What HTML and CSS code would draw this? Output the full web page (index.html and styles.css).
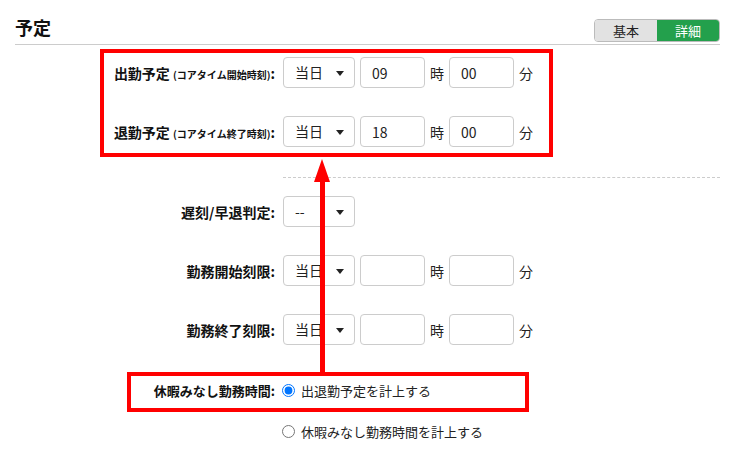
FILE: index.html
```html
<!DOCTYPE html>
<html lang="ja">
<head>
    <meta charset="UTF-8">
    <meta name="viewport" content="width=device-width, initial-scale=1.0">
    <title>予定</title>
    <link rel="stylesheet" href="styles.css">
</head>
<body>
    <div class="panel">
        <div class="panel-head">
            <h2>予定</h2>
            <div class="toggle">
                <span class="toggle-item">基本</span>
                <span class="toggle-item active">詳細</span>
            </div>
        </div>

        <div class="form">
            <div class="row">
                <label class="label">出勤予定 <small>(コアタイム開始時刻)</small>:</label>
                <div class="controls">
                    <span class="select">当日</span>
                    <input class="num" type="text" value="09">
                    <span class="unit">時</span>
                    <input class="num" type="text" value="00">
                    <span class="unit">分</span>
                </div>
            </div>
            <div class="row">
                <label class="label">退勤予定 <small>(コアタイム終了時刻)</small>:</label>
                <div class="controls">
                    <span class="select">当日</span>
                    <input class="num" type="text" value="18">
                    <span class="unit">時</span>
                    <input class="num" type="text" value="00">
                    <span class="unit">分</span>
                </div>
            </div>

            <div class="sep"></div>

            <div class="row">
                <label class="label">遅刻/早退判定:</label>
                <div class="controls">
                    <span class="select">--</span>
                </div>
            </div>
            <div class="row">
                <label class="label">勤務開始刻限:</label>
                <div class="controls">
                    <span class="select">当日</span>
                    <input class="num" type="text">
                    <span class="unit">時</span>
                    <input class="num" type="text">
                    <span class="unit">分</span>
                </div>
            </div>
            <div class="row">
                <label class="label">勤務終了刻限:</label>
                <div class="controls">
                    <span class="select">当日</span>
                    <input class="num" type="text">
                    <span class="unit">時</span>
                    <input class="num" type="text">
                    <span class="unit">分</span>
                </div>
            </div>

            <div class="row radio-row first">
                <label class="label">休暇みなし勤務時間:</label>
                <label class="radio"><input type="radio" name="mode" checked>出退勤予定を計上する</label>
            </div>
            <div class="row radio-row">
                <span class="label"></span>
                <label class="radio"><input type="radio" name="mode">休暇みなし勤務時間を計上する</label>
            </div>
        </div>

        <!-- 注記: 赤枠と矢印 -->
        <div class="mark mark-plan"></div>
        <div class="mark mark-leave"></div>
        <div class="arrow"></div>
    </div>
</body>
</html>
```

FILE: styles.css
```css
body {
    margin: 0;
    font-family: "Noto Sans CJK JP", "Noto Sans", sans-serif;
    color: #222;
    background: #fff;
}

.panel {
    position: relative;
    width: 732px;
    height: 468px;
}

.panel-head {
    display: flex;
    justify-content: space-between;
    align-items: flex-end;
    margin: 0 12px 0 15px;
    height: 44px;
    border-bottom: 1px solid #ccc;
}

.panel-head h2 {
    margin: 0 0 5px;
    font-size: 18px;
    line-height: 24px;
    color: #111;
}

.toggle {
    display: flex;
    margin-bottom: 2px;
    border: 1px solid #bbb;
    border-radius: 4px;
    overflow: hidden;
}

.toggle-item {
    width: 62px;
    height: 21px;
    line-height: 21px;
    text-align: center;
    font-size: 13px;
    background: #e2e2e2;
    color: #222;
}

.toggle-item.active {
    background: #23a04c;
    color: #fff;
}

.form {
    padding-top: 12px;
}

.row {
    display: flex;
    align-items: center;
    height: 31px;
    margin-bottom: 28px;
}

.label {
    width: 275px;
    text-align: right;
    font-size: 14px;
    font-weight: bold;
    color: #111;
    flex-shrink: 0;
}

.label small {
    font-size: 10px;
}

.controls {
    display: flex;
    align-items: center;
    gap: 5px;
    margin-left: 8px;
}

.select {
    position: relative;
    box-sizing: border-box;
    width: 72px;
    height: 31px;
    padding-left: 11px;
    border: 1px solid #ccc;
    border-radius: 4px;
    font-size: 14px;
    line-height: 29px;
}

.select::after {
    content: "";
    position: absolute;
    right: 10px;
    top: 13px;
    border-left: 4px solid transparent;
    border-right: 4px solid transparent;
    border-top: 5px solid #222;
}

.num {
    box-sizing: border-box;
    width: 65px;
    height: 31px;
    padding: 0 11px;
    border: 1px solid #ccc;
    border-radius: 4px;
    font-family: inherit;
    font-size: 14px;
    color: #222;
}

.unit {
    font-size: 14px;
    width: 14px;
}

.sep {
    margin: 2px 12px 18px 283px;
    border-top: 1px dashed #ccc;
}

.row:nth-of-type(2) {
    margin-bottom: 30px;
}

.radio-row {
    height: 20px;
    margin-bottom: 21px;
}

/* 前の行の margin-bottom と相殺されるので大きめに取る */
.radio-row.first {
    margin-top: 35px;
}

.radio-row .label {
    font-size: 13px;
}

.radio {
    display: flex;
    align-items: center;
    margin-left: 7px;
    font-size: 13px;
}

.radio input {
    width: 13px;
    height: 13px;
    margin: 0 6px 0 0;
}

.mark {
    position: absolute;
    border: 4px solid #f00;
}

.mark-plan {
    left: 100px;
    top: 49px;
    width: 445px;
    height: 100px;
}

.mark-leave {
    left: 127px;
    top: 372px;
    width: 394px;
    height: 32px;
}

.arrow {
    position: absolute;
    left: 320px;
    top: 178px;
    width: 5px;
    height: 194px;
    background: #f00;
}

.arrow::before {
    content: "";
    position: absolute;
    left: -6px;
    top: -19px;
    border-left: 8px solid transparent;
    border-right: 8px solid transparent;
    border-bottom: 23px solid #f00;
}
```
